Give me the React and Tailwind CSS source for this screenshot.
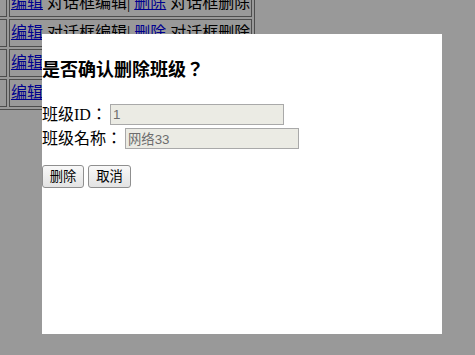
import React from "react";

const rows = [1, 2, 3, 4];

const cjk = "font-['Noto_Sans_CJK_JP',sans-serif]";
const inputCls =
  "ml-[3px] w-[174px] h-[21px] px-[2px] border border-[#a9a9a9] bg-[#ebebe4] text-[13.33px] text-[#6d6d6d] font-['Liberation_Sans','Noto_Sans_CJK_JP',sans-serif]";
const btnCls =
  "h-[23px] border border-[#8f8f8f] rounded-[3px] bg-gradient-to-b from-[#f8f8f8] to-[#e3e3e3]";

export default function App() {
  return (
    <div className="relative w-[475px] h-[355px] overflow-hidden bg-white font-['Liberation_Serif','Noto_Sans_CJK_JP',serif] text-[16px] text-black [text-spacing-trim:space-all]">
      {/* page table behind the dialog */}
      <table className="-mt-[14px] -ml-[20px] border-separate border-spacing-[2px] border border-[#808080]">
        <tbody>
          {rows.map((r) => (
            <tr key={r}>
              <td className="w-[24px] border border-[#808080] p-[1px] leading-[24px]">{r}</td>
              <td className="w-[243px] border border-[#808080] p-[1px] leading-[24px] whitespace-nowrap">
                <a href="#" className="text-[#0000ee] underline">编辑</a> 对话框编辑|{" "}
                <a href="#" className="text-[#0000ee] underline">删除</a> 对话框删除
              </td>
            </tr>
          ))}
        </tbody>
      </table>

      {/* dimming overlay */}
      <div className="fixed inset-0 bg-black/40" />

      {/* dialog */}
      <div className="fixed left-[42px] top-[34px] w-[400px] h-[300px] bg-white">
        <div className={`mt-[22px] leading-[24px] text-[18px] font-bold ${cjk}`}>
          是否确认删除班级？
        </div>

        <div className="mt-[22px] flex flex-col">
          <div className="h-[24px] flex items-center">
            <span>
              班级ID<span className={cjk}>：</span>
            </span>
            <input disabled value="1" readOnly className={inputCls} />
          </div>
          <div className="h-[24px] flex items-center">
            <span>
              班级名称<span className={cjk}>：</span>
            </span>
            <input disabled value="网络33" readOnly className={inputCls} />
          </div>
        </div>

        <div className="mt-[15px] flex gap-[4px] font-['Liberation_Sans','Noto_Sans_CJK_JP',sans-serif] text-[13.33px]">
          <button className={`w-[42px] ${btnCls}`}>删除</button>
          <button className={`w-[43px] ${btnCls}`}>取消</button>
        </div>
      </div>
    </div>
  );
}
